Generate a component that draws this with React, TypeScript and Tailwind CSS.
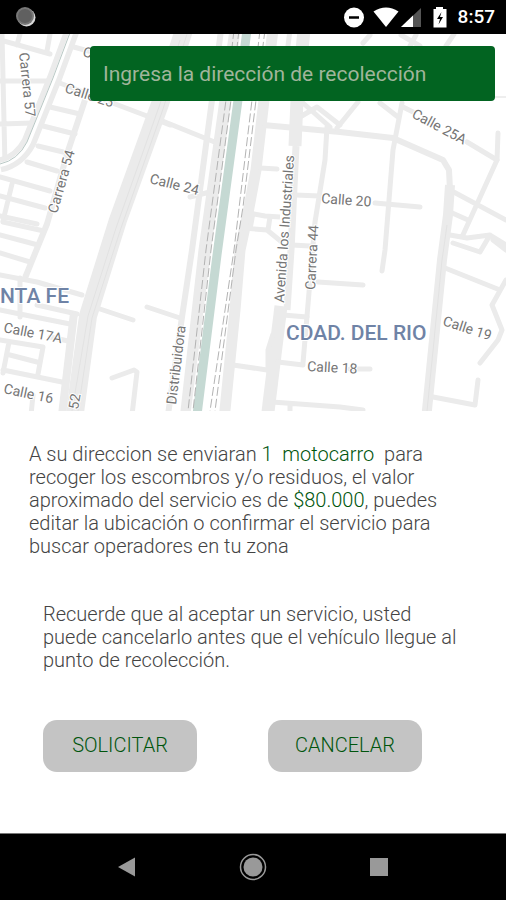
type Road = { d: string; w?: number };

const roads: Road[] = [
  { d: "M0 40L50 54M20 34L17 45M50 34L47 51M0 81H57M0 124L33 123M2 34L5 165" },
  { d: "M50 107L80 114M43 126L75 134M38 146L63 152M27 162L57 171M0 177L50 191M0 196L45 208M0 216L37 224M12 184L3 221" },
  { d: "M85 100L68 151L47 224L25 278", w: 6 },
  { d: "M70 46L92 52M57 82L147 116L170 125M160 120L217 143" },
  { d: "M3 222L44 231M0 235L38 245M0 253L30 262M0 275L37 282L82 295M0 310L20 314L70 324M37 305L77 314M20 278V317" },
  { d: "M0 340L43 347M10 355L37 362M3 370L62 382M9 342L3 373M43 347L38 374M33 395L31 415M50 337L68 341" },
  { d: "M74 313L62 415", w: 8 },
  { d: "M184 30L160 104L118 220L88 316L74 420", w: 18 },
  { d: "M97 308L133 320M147 307L180 318M112 378L134 370L137 372L132 415" },
  { d: "M221 30L212 100L192 250L182 317L168 415", w: 6 },
  { d: "M236 30L226 100L205 250L186 420", w: 13 },
  { d: "M290 30L281 100", w: 5 },
  { d: "M273 30L264 100L256 170L248 213L240 250L235 310L224 420", w: 11 },
  { d: "M263 125L340 132L393 138L443 160L449 170L450 190", w: 6 },
  { d: "M260 168L277 169M295 195L320 196M292 245L310 246M190 197L210 192" },
  { d: "M304 30L297 100L295 146", w: 13 },
  { d: "M296 146L291 250L287 310", w: 7 },
  { d: "M281 306L267 420", w: 13 },
  { d: "M273 334L268 350V370", w: 5 },
  { d: "M327 127L325 160L315 222L303 363" },
  { d: "M303 103L330 127M300 117L317 107L340 125M358 102L337 128M363 43L370 35M401 35L420 46M410 46L416 35M446 46L454 34" },
  { d: "M248 213L265 216L280 217M253 213L250 229M270 217L268 230M243 228L267 230L283 243", w: 5 },
  { d: "M233 365L267 370M283 315L307 317M278 362L303 365M318 282L363 285M272 402L340 407L363 410M290 405V415M350 369H370" },
  { d: "M380 103L398 117M402 103L393 150L385 250L382 271M403 107L413 112M467 142L497 160M375 203L420 207" },
  { d: "M498 133L497 160L462 237M450 190L506 220M450 212L468 220M450 235L467 238L490 235L506 245M453 243L480 252L490 235M493 240L506 250" },
  { d: "M450 185L448 215L442 260L426 420", w: 10 },
  { d: "M445 268L500 290M506 280L492 305L502 330L498 340L480 363M478 380L475 405L433 397" },
];

const rails = [
  "M239 30L231 100L211 250L193 411",
  "M234 30L226 100L206 250L188 411",
  "M260 30L252 100L234 250L210 411",
  "M265 30L256 100L243 207L236 250L215 411",
];

const streets = [
  { name: "Carrera 57", x: 19, y: 53, angle: 84 },
  { name: "Carrera 54", x: 57, y: 214, angle: -74 },
  { name: "Calle 26", x: 82, y: 56, angle: 15 },
  { name: "Calle 25", x: 64, y: 92, angle: 18 },
  { name: "Calle 24", x: 149, y: 183, angle: 14 },
  { name: "Avenida los Industriales", x: 284, y: 303, angle: -86 },
  { name: "Carrera 44", x: 315, y: 290, angle: -87 },
  { name: "Distribuidora", x: 176, y: 405, angle: -83 },
  { name: "Calle 20", x: 321, y: 203, angle: 4 },
  { name: "Calle 25A", x: 411, y: 117, angle: 28 },
  { name: "Calle 19", x: 442, y: 325, angle: 18 },
  { name: "Calle 18", x: 307, y: 371, angle: 3 },
  { name: "Calle 17A", x: 3, y: 332, angle: 11 },
  { name: "Calle 16", x: 3, y: 393, angle: 12 },
  { name: "52", x: 78, y: 410, angle: -80 },
];

function StatusBar() {
  return (
    <header className="flex h-[34px] items-center justify-between bg-black pr-[11px] pl-4 text-white">
      <svg className="size-5" viewBox="0 0 20 20" aria-hidden="true">
        <circle cx="10.500" cy="10.500" r="9" fill="#d9d9d9" />
        <circle cx="9" cy="9" r="9" fill="#777" />
        <circle cx="9" cy="9" r="7" fill="#606060" />
      </svg>
      <div className="flex items-center gap-1">
        <svg className="h-6 w-[104px]" viewBox="0 0 104 24" aria-hidden="true">
          <circle cx="10" cy="12.500" r="10" fill="#fff" />
          <path d="M5 12.500H15" stroke="#000" strokeWidth="2.500" />
          <path d="M29.500 6.500Q42 -1.500 54.500 6.500L42 22Z" fill="#fff" />
          <path d="M77 3V22H57Z" fill="#555" />
          <path d="M69 10.500V22H57Z" fill="#fff" />
          <path d="M92 2H99V4H102.500V22.500H89.500V4H92Z" fill="#fff" />
          <path d="M97.500 7L93 14H96L94.500 19.500L99 12H96Z" fill="#000" />
        </svg>
        <time className="w-[43px] text-right text-[19px] leading-6 font-medium">8:57</time>
      </div>
    </header>
  );
}

function CityMap() {
  return (
    <svg className="block w-full" viewBox="0 34 506 377" role="img" aria-label="Mapa">
      <g fill="none" stroke="#ebebeb" strokeLinejoin="round">
        {roads.map((road) => (
          <path key={road.d} d={road.d} strokeWidth={road.w ?? 5} strokeLinecap={road.w ? "butt" : "round"} />
        ))}
        <path d="M73 28L55 77L29 142Q19 161 0 165" strokeWidth="15" />
        <path d="M73 28L55 77L29 142Q19 161 0 165" strokeWidth="4" stroke="#fff" />
        <path d="M71 30L53 78L27 142Q18 160 0 164" stroke="#b9c8c5" />
        <path d="M180 40L160 104L116 228L88 316L72 411" stroke="#e2e2e2" />
        <path d="M187 34L163 109L121 228L92 318L78 411" stroke="#e2e2e2" />
        <path d="M447 225L442 260L427 411" stroke="#e2e2e2" />
      </g>
      <path d="M247 30L238 100L217 255L197 415" fill="none" stroke="#fff" strokeWidth="13" />
      <path d="M247 30L238 100L217 255L197 415" fill="none" stroke="#c5d9d3" strokeWidth="9" />
      <g fill="none" stroke="#b3b3b3" strokeDasharray="9 3">
        {rails.map((d) => (
          <path key={d} d={d} />
        ))}
      </g>
      <path d="M490 97H506" stroke="#ddd" />
      <g
        className="font-['Roboto',sans-serif] text-[14px]"
        fill="#757575"
        stroke="#fff"
        strokeWidth="2"
        paintOrder="stroke"
      >
        {streets.map((s) => (
          <text key={s.name} x={s.x} y={s.y} transform={`rotate(${s.angle} ${s.x} ${s.y})`}>
            {s.name}
          </text>
        ))}
      </g>
      <g
        className="font-['Roboto',sans-serif] text-[21px] font-medium"
        fill="#6f83a6"
        stroke="#fff"
        strokeWidth="2"
        paintOrder="stroke"
      >
        <text x="0" y="303">NTA FE</text>
        <text x="286" y="340">CDAD. DEL RIO</text>
      </g>
    </svg>
  );
}

function NavigationBar() {
  return (
    <nav className="mt-auto flex h-[67px] items-center justify-center gap-[86px] border-t border-[#777] bg-black">
      <button type="button" aria-label="Atrás" className="flex w-10 justify-center">
        <svg className="size-7" viewBox="0 0 28 28" aria-hidden="true">
          <path d="M5 14L22 4.500V23.500Z" fill="#999" />
        </svg>
      </button>
      <button type="button" aria-label="Inicio" className="flex w-10 justify-center">
        <svg className="size-7" viewBox="0 0 28 28" aria-hidden="true">
          <circle cx="14" cy="14" r="12.500" fill="none" stroke="#999" strokeWidth="1.500" />
          <circle cx="14" cy="14" r="9.500" fill="#999" />
        </svg>
      </button>
      <button type="button" aria-label="Recientes" className="flex w-10 justify-center">
        <svg className="size-7" viewBox="0 0 28 28" aria-hidden="true">
          <rect x="5" y="5" width="18" height="18" fill="#999" />
        </svg>
      </button>
    </nav>
  );
}

export default function App() {
  return (
    <div className="flex min-h-screen flex-col bg-white font-['Roboto',sans-serif]">
      <StatusBar />
      <main>
        <div className="relative">
          <CityMap />
          <input
            type="text"
            aria-label="Dirección de recolección"
            placeholder="Ingresa la dirección de recolección"
            className="absolute top-3 right-[11px] left-[90px] h-[55px] rounded-[4px] bg-[#026421] px-[13px] text-[21px] text-white outline-none placeholder:text-[#a0b59b]"
          />
        </div>
        <section className="px-[29px] pt-8 text-[20px] leading-[23px] font-light text-[#444]">
          <p className="max-w-[430px]">
            A su direccion se enviaran <span className="text-[#00550d]">1&nbsp; motocarro</span>&nbsp; para recoger los
            escombros y/o residuos, el valor aproximado del servicio es de{" "}
            <span className="text-[#00550d]">$80.000</span>, puedes editar la ubicación o confirmar el servicio para
            buscar operadores en tu zona
          </p>
          <div className="px-[14px]">
            <p className="mt-[45px] max-w-[420px]">
              Recuerde que al aceptar un servicio, usted puede cancelarlo antes que el vehículo llegue al punto de
              recolección.
            </p>
            <div className="mt-12 mb-8 flex gap-[71px] text-[#00550d]">
              <button type="button" className="h-[52px] w-[154px] rounded-[14px] bg-[#c4c4c4] pb-[2px]">
                SOLICITAR
              </button>
              <button type="button" className="h-[52px] w-[154px] rounded-[14px] bg-[#c4c4c4] pb-[2px]">
                CANCELAR
              </button>
            </div>
          </div>
        </section>
      </main>
      <NavigationBar />
    </div>
  );
}
